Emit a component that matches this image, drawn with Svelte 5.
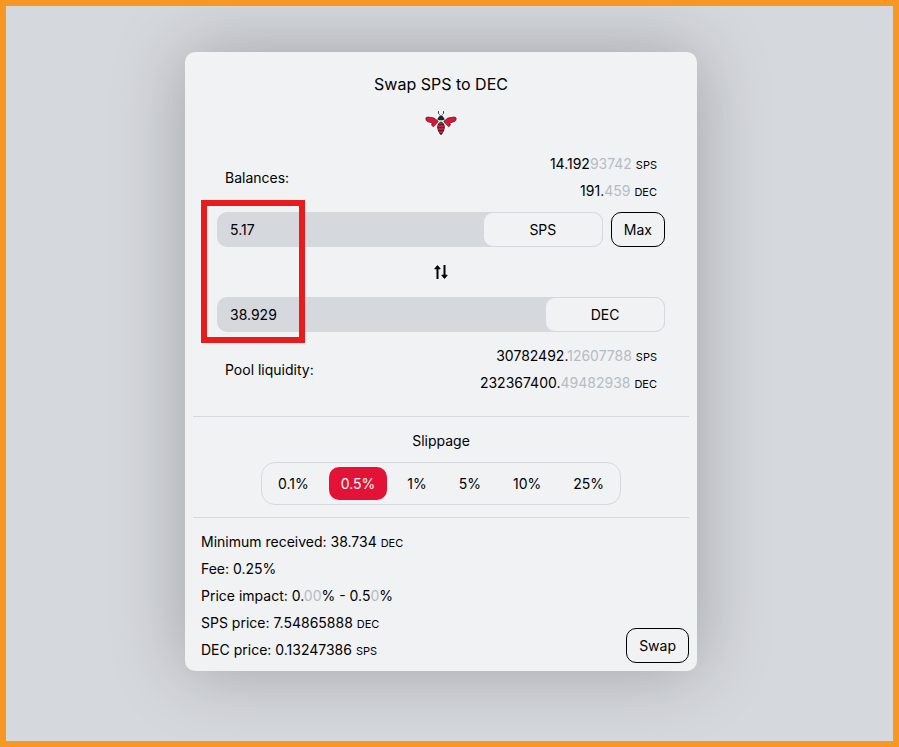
<script>
  const rates = [0.1, 0.5, 1, 5, 10, 25];

  const balances = [
    { main: '14.192', rest: '93742', unit: 'SPS' },
    { main: '191.', rest: '459', unit: 'DEC' },
  ];

  const liquidity = [
    { main: '30782492.', rest: '12607788', unit: 'SPS' },
    { main: '232367400.', rest: '49482938', unit: 'DEC' },
  ];

  let slippage = $state(0.5);
  let amountIn = $state('5.17');
  let amountOut = $state('38.929');
</script>

{#snippet amounts(label, rows)}
  <div class="amounts">
    <span>{label}</span>
    <div class="values">
      {#each rows as row}
        <div>{row.main}<span class="dim">{row.rest}</span> <small>{row.unit}</small></div>
      {/each}
    </div>
  </div>
{/snippet}

<main class="page">
  <div class="card">
    <header>
      <h1>Swap SPS to DEC</h1>
      <svg class="logo" width="32" height="32" viewBox="0 0 32 32" aria-hidden="true">
        <g fill="#e31337" stroke="#212529" stroke-width="0.7" stroke-linejoin="round">
          <path d="M0.8 12.4 Q1 11 3 11 L9 12 L13.2 15.2 L11.6 17.6 L8.4 20.8 L6.6 19.2 L7.2 17 L2.4 15.6 Q0.8 14.8 0.8 12.4Z" />
          <path d="M31.2 12.4 Q31 11 29 11 L23 12 L18.8 15.2 L20.4 17.6 L23.6 20.8 L25.4 19.2 L24.8 17 L29.6 15.6 Q31.2 14.8 31.2 12.4Z" />
          <path d="M16 15.8 Q19.4 17 19.5 21 Q19.4 25.6 16 28.6 Q12.6 25.6 12.5 21 Q12.6 17 16 15.8Z" />
        </g>
        <path d="M13 18.5H19M12.8 21.5H19.2M13.4 24.5H18.6" stroke="#212529" stroke-width="0.8" />
        <path d="M14.2 27L16 29L17.8 27Z" fill="#212529" />
        <path d="M12.5 13.8 Q12.5 11.4 13.9 11 Q14.3 9.2 16 9.2 Q17.7 9.2 18.1 11 Q19.5 11.4 19.5 13.8 Q16 14.8 12.5 13.8Z" fill="#212529" />
        <path d="M13.5 5.2V7.4L14.6 8.6M18.5 5.2V7.4L17.4 8.6" fill="none" stroke="#212529" stroke-width="0.9" />
      </svg>
    </header>

    <section class="form">
      {@render amounts('Balances:', balances)}

      <div class="fields">
        <div class="row">
          <div class="field">
            <input type="text" aria-label="SPS amount" bind:value={amountIn} />
            <button class="token">SPS</button>
          </div>
          <button class="outline">Max</button>
        </div>
        <button class="flip" aria-label="Switch tokens">
          <svg width="16" height="16" viewBox="0 0 16 16" fill="none" stroke="#000" stroke-width="2">
            <path d="M4.5 15V3M11.5 1V13" />
            <path d="M4.5 1.6L7.2 4.8H1.8ZM11.5 14.4L14.2 11.2H8.8Z" fill="#000" stroke-width="1" stroke-linejoin="round" />
          </svg>
        </button>
        <div class="row">
          <div class="field">
            <input type="text" aria-label="DEC amount" bind:value={amountOut} />
            <button class="token">DEC</button>
          </div>
        </div>
        <div class="highlight"></div>
      </div>

      {@render amounts('Pool liquidity:', liquidity)}
    </section>

    <section class="slippage">
      <h2>Slippage</h2>
      <div class="rates">
        {#each rates as rate}
          <button class:active={slippage === rate} aria-pressed={slippage === rate} onclick={() => (slippage = rate)}>
            {rate}%
          </button>
        {/each}
      </div>
    </section>

    <section class="summary">
      <div>
        <div>Minimum received: 38.734 <small>DEC</small></div>
        <div>Fee: 0.25%</div>
        <div>Price impact: 0.<span class="dim">00</span>% - 0.5<span class="dim">0</span>%</div>
        <div>SPS price: 7.54865888 <small>DEC</small></div>
        <div>DEC price: 0.13247386 <small>SPS</small></div>
      </div>
      <button class="outline">Swap</button>
    </section>
  </div>
</main>

<style>
  :global(body) {
    margin: 0;
  }

  .page {
    box-sizing: border-box;
    min-height: 100vh;
    padding: 46px 17px 46px 0;
    border: 6px solid #f79824;
    background: #d5d8dd;
    color: #000;
    font-family: Inter, sans-serif;
    font-size: 14px;
    line-height: 27px;
    overflow: hidden;
  }

  .card {
    box-sizing: border-box;
    max-width: 512px;
    margin: 0 auto;
    padding: 8px;
    border-radius: 10px;
    background: #f0f2f4;
    box-shadow: 0 0 72px rgba(0, 0, 0, 0.25);
  }

  header {
    display: flex;
    flex-direction: column;
    align-items: center;
    gap: 8px;
    padding: 11px 0 12px;
  }

  h1,
  h2 {
    margin: 0;
    font-size: 16px;
    font-weight: 400;
  }

  h2 {
    font-size: 14px;
  }

  small {
    font-size: 11px;
    line-height: 1;
  }

  button,
  input {
    box-sizing: border-box;
    margin: 0;
    font: inherit;
    color: inherit;
  }

  button {
    border: none;
    background: none;
    cursor: pointer;
  }

  .logo {
    display: block;
  }

  .form {
    padding: 0 24px 20px;
  }

  .amounts {
    display: flex;
    align-items: center;
    justify-content: space-between;
    padding: 0 8px;
  }

  .values {
    text-align: right;
  }

  .dim {
    color: #b5bcc3;
  }

  .fields {
    position: relative;
    margin: 8px 0 10px;
  }

  .row {
    display: flex;
    gap: 8px;
  }

  .field {
    display: flex;
    flex: 1;
    min-width: 0;
    border-radius: 10px;
    background: #d5d8dd;
  }

  .field input {
    flex: 1;
    min-width: 0;
    height: 35px;
    padding: 0 12px;
    border: 1px solid transparent;
    background: none;
    outline: none;
  }

  .token {
    width: 120px;
    border: 1px solid #d5d8dd;
    border-radius: 10px;
    background: #f0f2f4;
  }

  .outline {
    height: 35px;
    padding: 0 12px;
    border: 1px solid #000;
    border-radius: 10px;
  }

  .flip {
    display: flex;
    align-items: center;
    justify-content: center;
    height: 50px;
    margin: 0 auto;
  }

  .highlight {
    position: absolute;
    top: -12px;
    bottom: -11px;
    left: -16px;
    box-sizing: border-box;
    width: 104px;
    border: 6px solid #e81b1d;
    pointer-events: none;
  }

  .slippage {
    display: flex;
    flex-direction: column;
    align-items: center;
    gap: 8px;
    padding: 10px 0 12px;
    border-top: 1px solid #d5d8dd;
  }

  .rates {
    display: flex;
    gap: 8px;
    padding: 4px;
    border: 1px solid #d5d8dd;
    border-radius: 14px;
  }

  .rates button {
    padding: 3px 12px;
    border-radius: 10px;
  }

  .rates .active {
    background: #e31337;
    color: #fff;
  }

  .summary {
    display: flex;
    align-items: flex-end;
    justify-content: space-between;
    padding-top: 10px;
    border-top: 1px solid #d5d8dd;
  }

  .summary > div {
    padding-left: 8px;
  }
</style>
